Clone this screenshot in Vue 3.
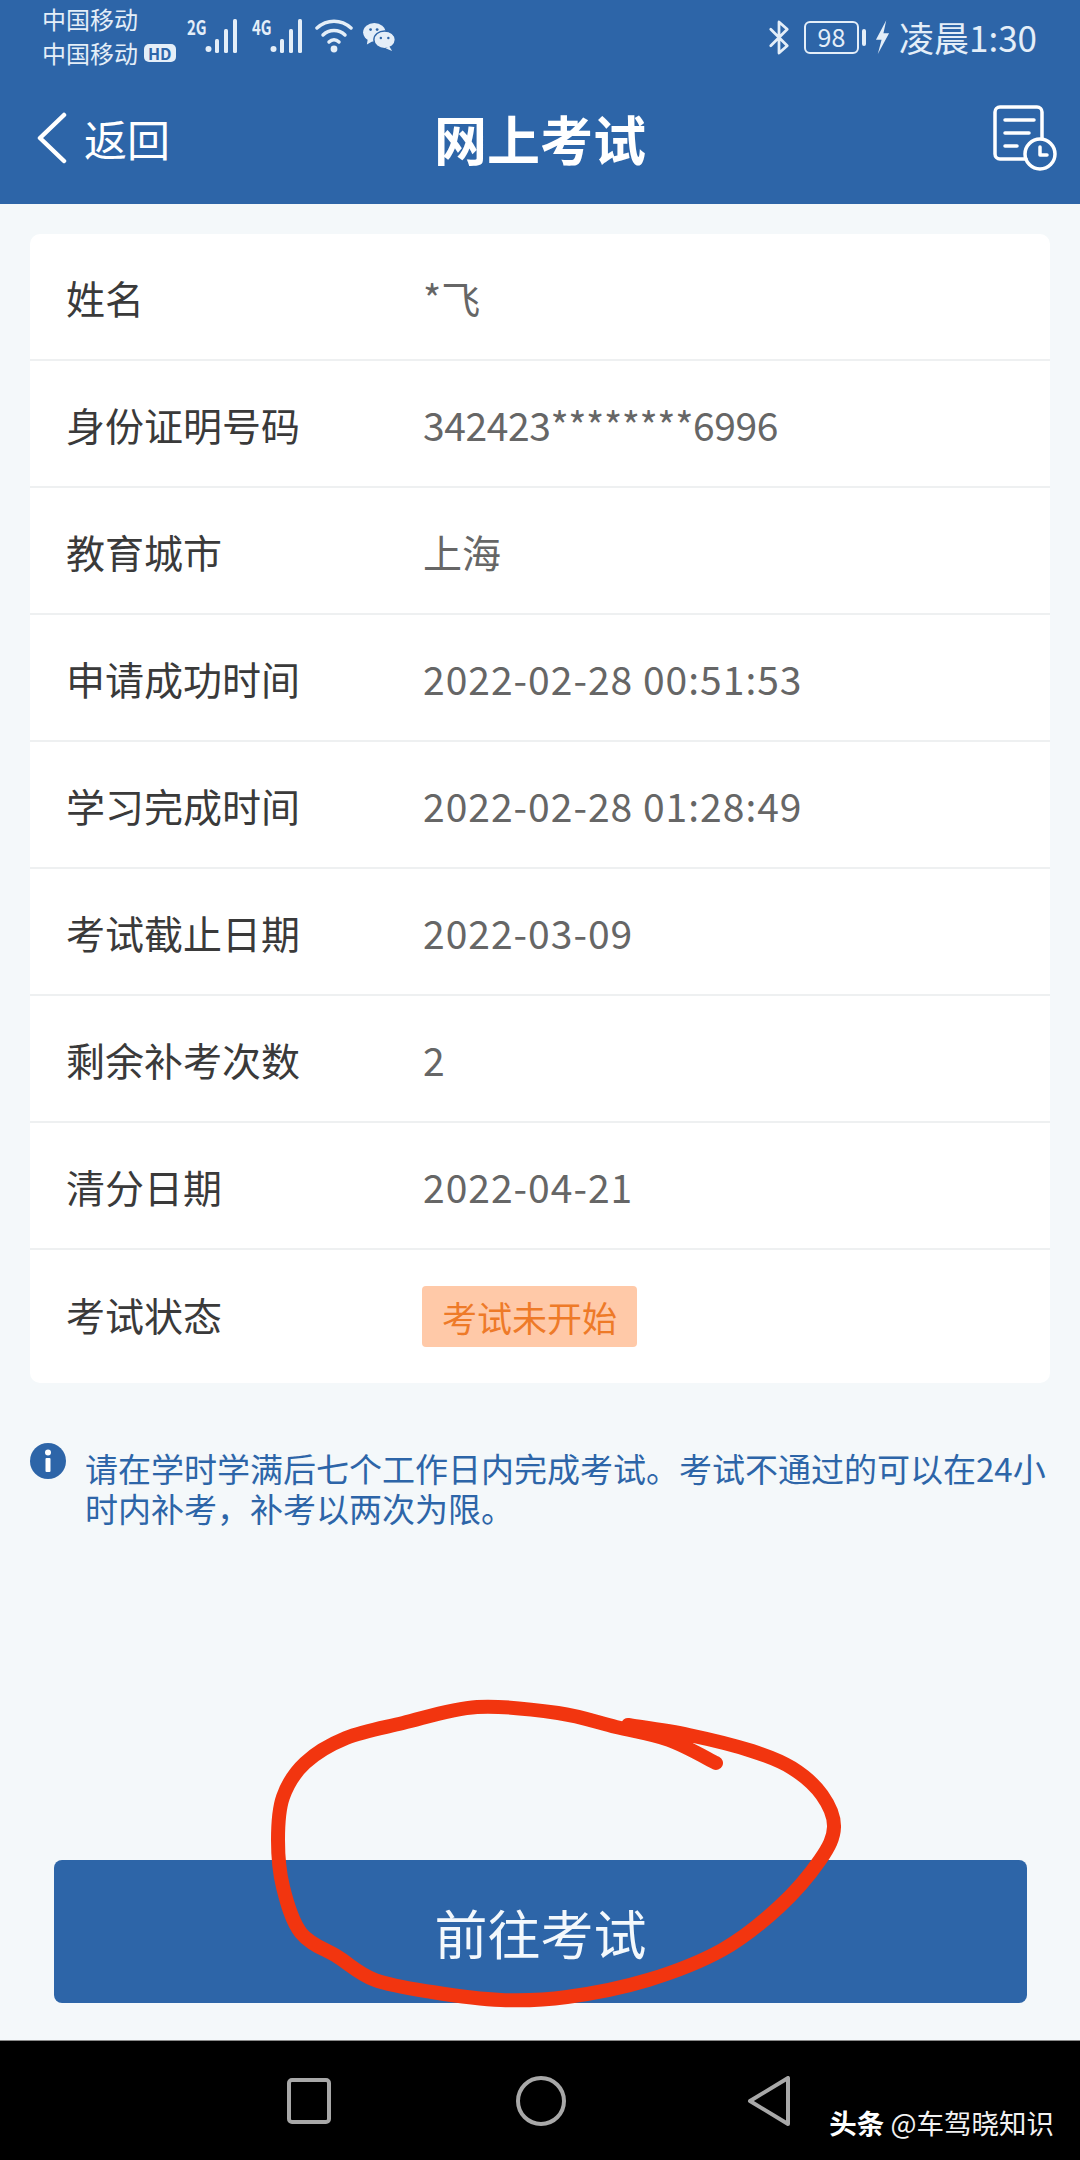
<template>
  <div class="page">
    <header class="top">
      <div class="status">
        <div class="carriers">
          <span>中国移动</span>
          <span class="c2">中国移动<b class="hd">HD</b></span>
        </div>
        <div class="sig">
          <span class="gen">2G</span>
          <svg width="34" height="34" viewBox="0 0 34 34"><g fill="#e4eef8"><circle cx="3.5" cy="30" r="3"/><rect x="10" y="20" width="4" height="14" rx="1.5"/><rect x="19" y="10" width="4" height="24" rx="1.5"/><rect x="28" y="0" width="4" height="34" rx="1.5"/></g></svg>
          <span class="gen g2">4G</span>
          <svg width="34" height="34" viewBox="0 0 34 34"><g fill="#e4eef8"><circle cx="3.5" cy="30" r="3"/><rect x="10" y="20" width="4" height="14" rx="1.5"/><rect x="19" y="10" width="4" height="24" rx="1.5"/><rect x="28" y="0" width="4" height="34" rx="1.5"/></g></svg>
          <svg class="wifi" width="38" height="34" viewBox="0 0 38 34" fill="none" stroke="#e4eef8" stroke-width="3.5" stroke-linecap="round"><path d="M2 9C12 0 26 0 36 9"/><path d="M8 16C14 10 24 10 30 16"/><path d="M14 23c3-3 7-3 10 0"/><circle cx="19" cy="30" r="3.4" fill="#e4eef8" stroke="none"/></svg>
          <svg class="wechat" width="34" height="28" viewBox="0 0 36 30"><ellipse cx="13" cy="10" rx="12" ry="10" fill="#e4eef8"/><path d="M6 17l-1 6 7-4z" fill="#e4eef8"/><ellipse cx="24" cy="18" rx="11.5" ry="9.5" fill="#e4eef8" stroke="#2d65a8" stroke-width="1.5"/><path d="M29 25l3 5-7-3z" fill="#e4eef8"/><g fill="#2d65a8"><circle cx="9" cy="7" r="1.5"/><circle cx="16" cy="7" r="1.5"/><circle cx="20" cy="16" r="1.3"/><circle cx="28" cy="16" r="1.3"/></g></svg>
        </div>
        <div class="right">
          <svg width="22" height="37" viewBox="0 0 24 38" fill="none" stroke="#e4eef8" stroke-width="3" stroke-linejoin="round" stroke-linecap="round"><path d="M3 10l18 18-9 8V2l9 8L3 28"/></svg>
          <span class="batt">98</span>
          <span class="nub"></span>
          <svg width="15" height="34" viewBox="0 0 16 36"><path d="M12 0L1 21h6L3 36l12-22H9z" fill="#e4eef8"/></svg>
          <span class="time">凌晨1:30</span>
        </div>
      </div>
      <div class="nav">
        <div class="back">
          <svg width="32" height="52" viewBox="0 0 32 52" fill="none" stroke="#fff" stroke-width="4.5" stroke-linecap="round" stroke-linejoin="round"><path d="M28 3L4 26l24 23"/></svg>
          <span>返回</span>
        </div>
        <h1>网上考试</h1>
        <svg class="hist" width="64" height="66" viewBox="0 0 64 66" fill="none" stroke="#fff" stroke-width="3.5" stroke-linecap="round" stroke-linejoin="round">
          <path d="M33 54H7a5 5 0 0 1-5-5V7a5 5 0 0 1 5-5h37a5 5 0 0 1 5 5v26"/>
          <path d="M12 15h29M12 28h24M12 41h12"/>
          <circle cx="47" cy="49" r="15"/>
          <path d="M47 42v8h7"/>
        </svg>
      </div>
    </header>

    <main class="body">
      <section class="card">
        <div v-for="r in rows" :key="r.label" class="row">
          <span class="label">{{ r.label }}</span>
          <span v-if="r.tag" class="tag">{{ r.value }}</span>
          <span v-else :class="['value', r.cls]">{{ r.value }}</span>
        </div>
      </section>

      <div class="tip">
        <svg class="tip-ic" width="36" height="36" viewBox="0 0 36 36"><circle cx="18" cy="18" r="18" fill="#2d65a8"/><circle cx="18" cy="9.5" r="3" fill="#fff"/><rect x="15.5" y="15" width="5" height="14" rx="1" fill="#fff"/></svg>
        <p>请在学时学满后七个工作日内完成考试。考试不通过的可以在24小时内补考，补考以两次为限。</p>
      </div>

      <button class="go">前往考试</button>
    </main>

    <footer class="sysnav">
      <svg width="44" height="46" viewBox="0 0 44 46" fill="none" stroke="#a8a8a8" stroke-width="4"><rect x="2" y="2" width="40" height="42" rx="3"/></svg>
      <svg width="50" height="50" viewBox="0 0 50 50" fill="none" stroke="#a8a8a8" stroke-width="4"><circle cx="25" cy="25" r="23"/></svg>
      <svg width="44" height="50" viewBox="0 0 44 50" fill="none" stroke="#a8a8a8" stroke-width="4" stroke-linejoin="round"><path d="M41 2v46L3 25z"/></svg>
      <span class="mark"><b>头条</b> @车驾晓知识</span>
    </footer>

    <svg class="scribble" width="1080" height="2160" viewBox="0 0 1080 2160" fill="none">
      <path :d="scribble" stroke="#f2350f" stroke-width="14" stroke-linecap="round" stroke-linejoin="round"/>
    </svg>
  </div>
</template>

<script setup>
const rows = [
  { label: '姓名', value: '*飞' },
  { label: '身份证明号码', value: '342423********6996', cls: 'tight' },
  { label: '教育城市', value: '上海' },
  { label: '申请成功时间', value: '2022-02-28 00:51:53', cls: 'wide' },
  { label: '学习完成时间', value: '2022-02-28 01:28:49', cls: 'wide' },
  { label: '考试截止日期', value: '2022-03-09', cls: 'wide' },
  { label: '剩余补考次数', value: '2' },
  { label: '清分日期', value: '2022-04-21', cls: 'wide' },
  { label: '考试状态', value: '考试未开始', tag: true }
]

// red hand-drawn circle round the button
const pts = [
  [716, 1763], [669, 1740], [616, 1727], [558, 1713], [477, 1707], [403, 1723], [346, 1738],
  [305, 1763], [283, 1797], [278, 1840], [283, 1887], [301, 1933], [338, 1957], [375, 1980],
  [432, 1992], [501, 2000], [567, 1997], [648, 1980], [722, 1950], [779, 1907], [820, 1860],
  [834, 1827], [822, 1795], [792, 1768], [752, 1751], [689, 1735], [628, 1725]
]

const smooth = (p) => {
  let d = `M${p[0][0]} ${p[0][1]}`
  for (let i = 0; i < p.length - 1; i++) {
    const a = p[i - 1] || p[i]
    const b = p[i]
    const c = p[i + 1]
    const e = p[i + 2] || c
    const c1x = b[0] + (c[0] - a[0]) / 6
    const c1y = b[1] + (c[1] - a[1]) / 6
    const c2x = c[0] - (e[0] - b[0]) / 6
    const c2y = c[1] - (e[1] - b[1]) / 6
    d += `C${c1x} ${c1y} ${c2x} ${c2y} ${c[0]} ${c[1]}`
  }
  return d
}

const scribble = smooth(pts)
</script>

<style scoped>
.page { position: relative; width: 1080px; height: 2160px; display: flex; flex-direction: column; overflow: hidden; background: #f4f8fa; font-family: "Noto Sans CJK SC", "Noto Sans", sans-serif; }

.top { height: 204px; flex: none; background: #2d65a8; color: #fff; display: flex; flex-direction: column; }
.status { height: 72px; display: flex; align-items: flex-start; color: #e4eef8; }
.carriers { display: flex; flex-direction: column; margin: 2px 0 0 42px; width: 145px; font-size: 24px; line-height: 34px; }
.c2 { display: flex; align-items: center; }
.hd { margin-left: 6px; background: #e4eef8; color: #2d65a8; font-size: 16px; line-height: 18px; padding: 0 4px; border-radius: 5px; }
.sig { display: flex; align-items: flex-start; margin-top: 19px; }
.gen { font-size: 20px; font-weight: bold; line-height: 16px; width: 18px; transform: scaleX(0.75); transform-origin: left top; }
.g2 { margin-left: 13px; }
.wifi { margin-left: 11px; }
.wechat { margin: 4px 0 0 9px; }
.right { margin: 18px 0 0 auto; padding-right: 43px; display: flex; align-items: center; }
.batt { margin-left: 14px; width: 55px; height: 33px; box-sizing: border-box; border: 2.5px solid #e4eef8; border-radius: 6px; font-size: 25px; line-height: 27px; text-align: center; }
.nub { width: 4px; height: 17px; background: #e4eef8; margin: 0 9px 0 3px; border-radius: 2px; }
.time { font-size: 35px; line-height: 38px; margin-left: 9px; }

.nav { flex: 1; display: grid; grid-template-columns: 1fr auto 1fr; align-items: center; padding: 0 30px; }
.back { display: flex; align-items: center; gap: 16px; font-size: 43px; margin-left: 6px; }
.nav h1 { margin: 0; font-size: 53px; font-weight: bold; }
.hist { justify-self: end; margin-right: -7px; }

.body { flex: 1; display: flex; flex-direction: column; padding: 30px 30px 0; min-height: 0; }
.card { background: #fff; border-radius: 10px; }
.row { height: 127px; box-sizing: border-box; display: flex; align-items: center; padding-left: 36px; border-bottom: 2px solid #eef0f1; }
.row:last-child { border-bottom: none; height: 133px; }
.row:last-child .label { margin-bottom: 6px; }
.label { width: 357px; font-size: 39px; color: #3a3a3a; }
.value { font-size: 39px; color: #666; }
.wide { letter-spacing: 1px; }
.tight { letter-spacing: -0.4px; }
.tag { background: #ffc9a8; color: #ee7a28; font-size: 35px; line-height: 61px; padding: 0 20px; border-radius: 4px; margin-left: -1px; }

.tip { display: flex; margin-top: 60px; }
.tip-ic { flex: none; margin-right: 19px; }
.tip p { margin: 5px 0 0; font-size: 33px; line-height: 40px; color: #2d65a8; }

.go { margin: auto 23px 37px 24px; height: 143px; border: none; border-radius: 8px; background: #2d65a8; color: #f3f8fc; font-size: 53px; font-family: inherit; }

.sysnav { position: relative; height: 120px; flex: none; background: #000; border-top: 1px solid #8a8a8a; box-sizing: border-box; display: flex; align-items: center; padding-left: 287px; }
.sysnav svg:nth-child(2) { margin-left: 185px; }
.sysnav svg:nth-child(3) { margin-left: 181px; }
.mark { position: absolute; right: 26px; bottom: 20px; color: #f2f2f2; font-size: 27.5px; line-height: 36px; }
.mark b { color: #fff; }

.scribble { position: absolute; left: 0; top: 0; pointer-events: none; }
</style>
